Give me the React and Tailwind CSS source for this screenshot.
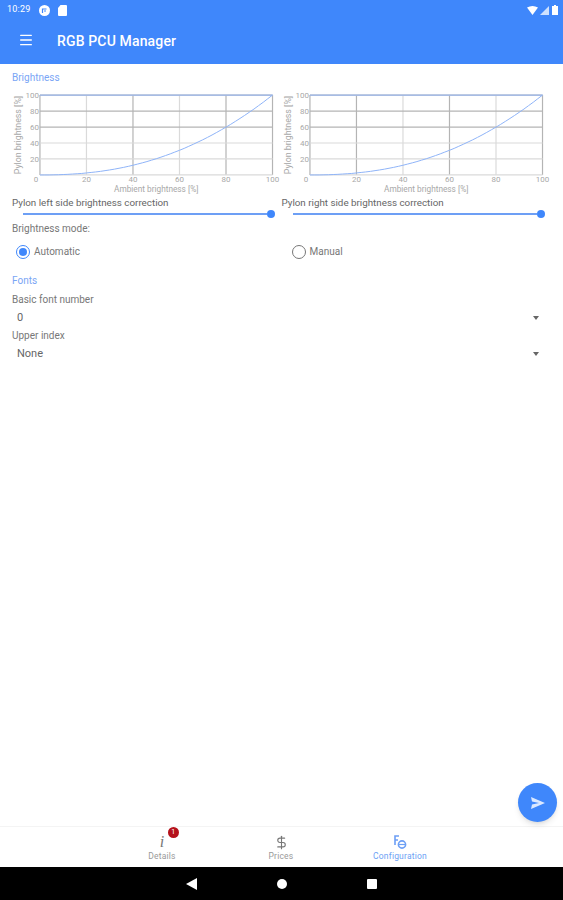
import { Menu, DollarSign } from "lucide-react";

const XS = [0, 20, 40, 60, 80, 100];
const DARK = "#b4b4b4";
const LIGHT = "#dadada";

function Chart({ lightX }) {
    const px = (v) => 28 + v * 2.33;
    const py = (v) => 85 - v * 0.8;
    const curve = Array.from({ length: 51 }, (_, i) => {
        const v = i * 2;
        return `${i ? "L" : "M"}${px(v).toFixed(1)} ${py(100 * Math.pow(v / 100, 2.3)).toFixed(1)}`;
    }).join(" ");

    return (
        <svg width="270" height="104" viewBox="0 0 270 104" className="block">
            {XS.map((v) => (
                <line key={"x" + v} x1={px(v)} x2={px(v)} y1={py(0)} y2={py(100)} stroke={lightX.includes(v) ? LIGHT : DARK} strokeWidth="1.2" />
            ))}
            {XS.map((v) => (
                <line key={"y" + v} x1={px(0)} x2={px(100)} y1={py(v)} y2={py(v)} stroke={v === 40 || v === 20 || v === 0 ? LIGHT : DARK} strokeWidth="1.2" />
            ))}
            <line x1={px(0)} x2={px(100)} y1={py(100)} y2={py(100)} stroke="#9db9ee" strokeWidth="1.2" />
            <path d={curve} fill="none" stroke="#8fb4f8" strokeWidth="1" />
            {XS.map((v) => (
                <text key={"tx" + v} x={px(v) - (v === 0 ? 4 : 0)} y="92.5" textAnchor="middle" fontSize="8" fill="#a8a8a8">{v}</text>
            ))}
            {XS.slice(1).map((v) => (
                <text key={"ty" + v} x="27" y={py(v) + 3} textAnchor="end" fontSize="8" fill="#a8a8a8">{v}</text>
            ))}
            <text x={px(50)} y="102" textAnchor="middle" fontSize="8.3" fill="#a8a8a8">Ambient brightness [%]</text>
            <text transform="translate(9 45) rotate(-90)" textAnchor="middle" fontSize="8.8" fill="#a8a8a8">Pylon brightness [%]</text>
        </svg>
    );
}

function Slider({ label }) {
    return (
        <div className="w-[270px]">
            <div className="text-[9.8px] leading-[14px] text-[#666]">{label}</div>
            <div className="flex items-center h-[9px] -mt-[1px] pl-[11px] pr-[1px]">
                <div className="h-[2px] w-[244px] bg-[#6d9ff5]" />
                <div className="w-[8px] h-[8px] rounded-full bg-[#3f87fb]" />
            </div>
        </div>
    );
}

function Radio({ label, checked }) {
    return (
        <div className="w-[270px] flex items-center gap-[4px] pl-[4px]">
            {checked ? (
                <div className="w-[14px] h-[14px] rounded-full border-[1.5px] border-[#3f87fb] flex items-center justify-center">
                    <div className="w-[8px] h-[8px] rounded-full bg-[#3f87fb]" />
                </div>
            ) : (
                <div className="w-[14px] h-[14px] ml-[6px] rounded-full border-[1.5px] border-[#777]" />
            )}
            <span className="text-[10px] text-[#777]">{label}</span>
        </div>
    );
}

function Dropdown({ label, value }) {
    return (
        <div>
            <div className="text-[10px] leading-[14px] text-[#777]">{label}</div>
            <div className="flex items-center justify-between h-[22px] pl-[5px] pr-[12px]">
                <span className="text-[11px] text-[#666]">{value}</span>
                <div className="w-0 h-0 border-x-[3.5px] border-x-transparent border-t-[4px] border-t-[#666]" />
            </div>
        </div>
    );
}

function NavItem({ icon, label, active }) {
    return (
        <div className="w-[119px] flex flex-col items-center">
            <div className="relative h-[18px] flex items-center justify-center">{icon}</div>
            <span className={`text-[8.5px] leading-[11px] tracking-[0.2px] ${active ? "text-[#6d9ff5]" : "text-[#999]"}`}>{label}</span>
        </div>
    );
}

export default function App() {
    return (
        <div className="w-[563px] h-[900px] flex flex-col bg-white font-['Roboto',sans-serif] overflow-hidden">
            {/* status bar */}
            <div className="h-[19px] bg-[#3f87fb] flex items-center justify-between pl-[7px] pr-[5px] pt-[1px] text-white">
                <div className="flex items-center gap-[8px]">
                    <span className="text-[9px] tracking-[0.2px]">10:29</span>
                    <svg width="11" height="11" viewBox="0 0 11 11" className="ml-[1px]">
                        <circle cx="5.5" cy="5.5" r="5.5" fill="#fff" />
                        <path d="M3.5 8V4h4M5 6h2" stroke="#3f87fb" strokeWidth="1.2" fill="none" />
                    </svg>
                    <svg width="9" height="11" viewBox="0 0 9 11">
                        <path d="M2.5 0H8a1 1 0 0 1 1 1v9a1 1 0 0 1-1 1H1a1 1 0 0 1-1-1V3z" fill="#fff" />
                    </svg>
                </div>
                <div className="flex items-center gap-[2px]">
                    <svg width="11" height="9" viewBox="0 0 11 9"><path d="M0 1.5Q5.5-1.5 11 1.5L5.5 9z" fill="#fff" /></svg>
                    <svg width="9" height="9" viewBox="0 0 9 9"><path d="M9 0v9H0z" fill="#fff" opacity=".75" /></svg>
                    <svg width="6" height="10" viewBox="0 0 6 10" className="ml-[1px]"><path d="M2 0h2v1h2v9H0V1h2z" fill="#fff" /></svg>
                </div>
            </div>

            {/* toolbar */}
            <div className="h-[45px] bg-[#3f87fb] flex items-center text-white shrink-0">
                <Menu className="w-[16px] h-[16px] ml-[18px] mb-[3px]" strokeWidth={2} />
                <span className="ml-[23px] mb-[1px] text-[14px] tracking-[0.15px] font-medium">RGB PCU Manager</span>
            </div>

            {/* content */}
            <div className="flex-1 px-[12px] pt-[8px]">
                <div className="text-[10px] leading-[12px] text-[#7aa5f5]">Brightness</div>
                <div className="flex mt-[6px]">
                    <Chart lightX={[20, 60]} />
                    <Chart lightX={[40, 80]} />
                </div>
                <div className="flex mt-[2px]">
                    <Slider label="Pylon left side brightness correction" />
                    <Slider label="Pylon right side brightness correction" />
                </div>
                <div className="text-[10px] leading-[14px] text-[#777] mt-[4px]">Brightness mode:</div>
                <div className="flex mt-[8px]">
                    <Radio label="Automatic" checked />
                    <Radio label="Manual" />
                </div>
                <div className="text-[10px] leading-[12px] text-[#7aa5f5] mt-[16px]">Fonts</div>
                <div className="mt-[6px]">
                    <Dropdown label="Basic font number" value="0" />
                    <Dropdown label="Upper index" value="None" />
                </div>
            </div>

            {/* bottom nav */}
            <div className="relative h-[41px] shrink-0 border-t border-[#f4f4f4] flex justify-center pt-[6px] pr-[1px]">
                <button className="absolute right-[6px] -top-[44px] w-[39px] h-[39px] rounded-full bg-[#3f87fb] shadow-md flex items-center justify-center">
                    <svg width="14" height="12" viewBox="0 0 14 12"><path d="M0 0l14 6L0 12l1-4.6L8 6 1 4.6z" fill="#dbe8ff" /></svg>
                </button>
                <NavItem
                    label="Details"
                    icon={
                        <>
                            <span className="text-[16px] leading-none italic text-[#777] font-['Liberation_Serif',serif]">i</span>
                            <span className="absolute -top-[6px] left-[8px] w-[11px] h-[11px] rounded-full bg-[#b5121b] text-white text-[7px] leading-[11px] text-center">1</span>
                        </>
                    }
                />
                <NavItem label="Prices" icon={<DollarSign className="w-[15px] h-[15px] text-[#777]" strokeWidth={1.8} />} />
                <NavItem
                    label="Configuration"
                    active
                    icon={
                        <svg width="13" height="14" viewBox="0 0 13 14">
                            <path d="M1 10V1h4M1 5h3" stroke="#6d9ff5" strokeWidth="1.6" fill="none" />
                            <circle cx="8" cy="9.5" r="3.6" fill="none" stroke="#6d9ff5" strokeWidth="1.6" />
                            <path d="M4.5 9.5h7" stroke="#6d9ff5" strokeWidth="1.2" />
                        </svg>
                    }
                />
            </div>

            {/* android nav */}
            <div className="h-[33px] shrink-0 bg-black flex items-center justify-center gap-[80px] pr-[1px]">
                <svg width="11" height="12" viewBox="0 0 11 12"><path d="M11 0v12L0 6z" fill="#fff" /></svg>
                <div className="w-[10px] h-[10px] rounded-full bg-white" />
                <div className="w-[10px] h-[10px] bg-white rounded-[1px]" />
            </div>
        </div>
    );
}
